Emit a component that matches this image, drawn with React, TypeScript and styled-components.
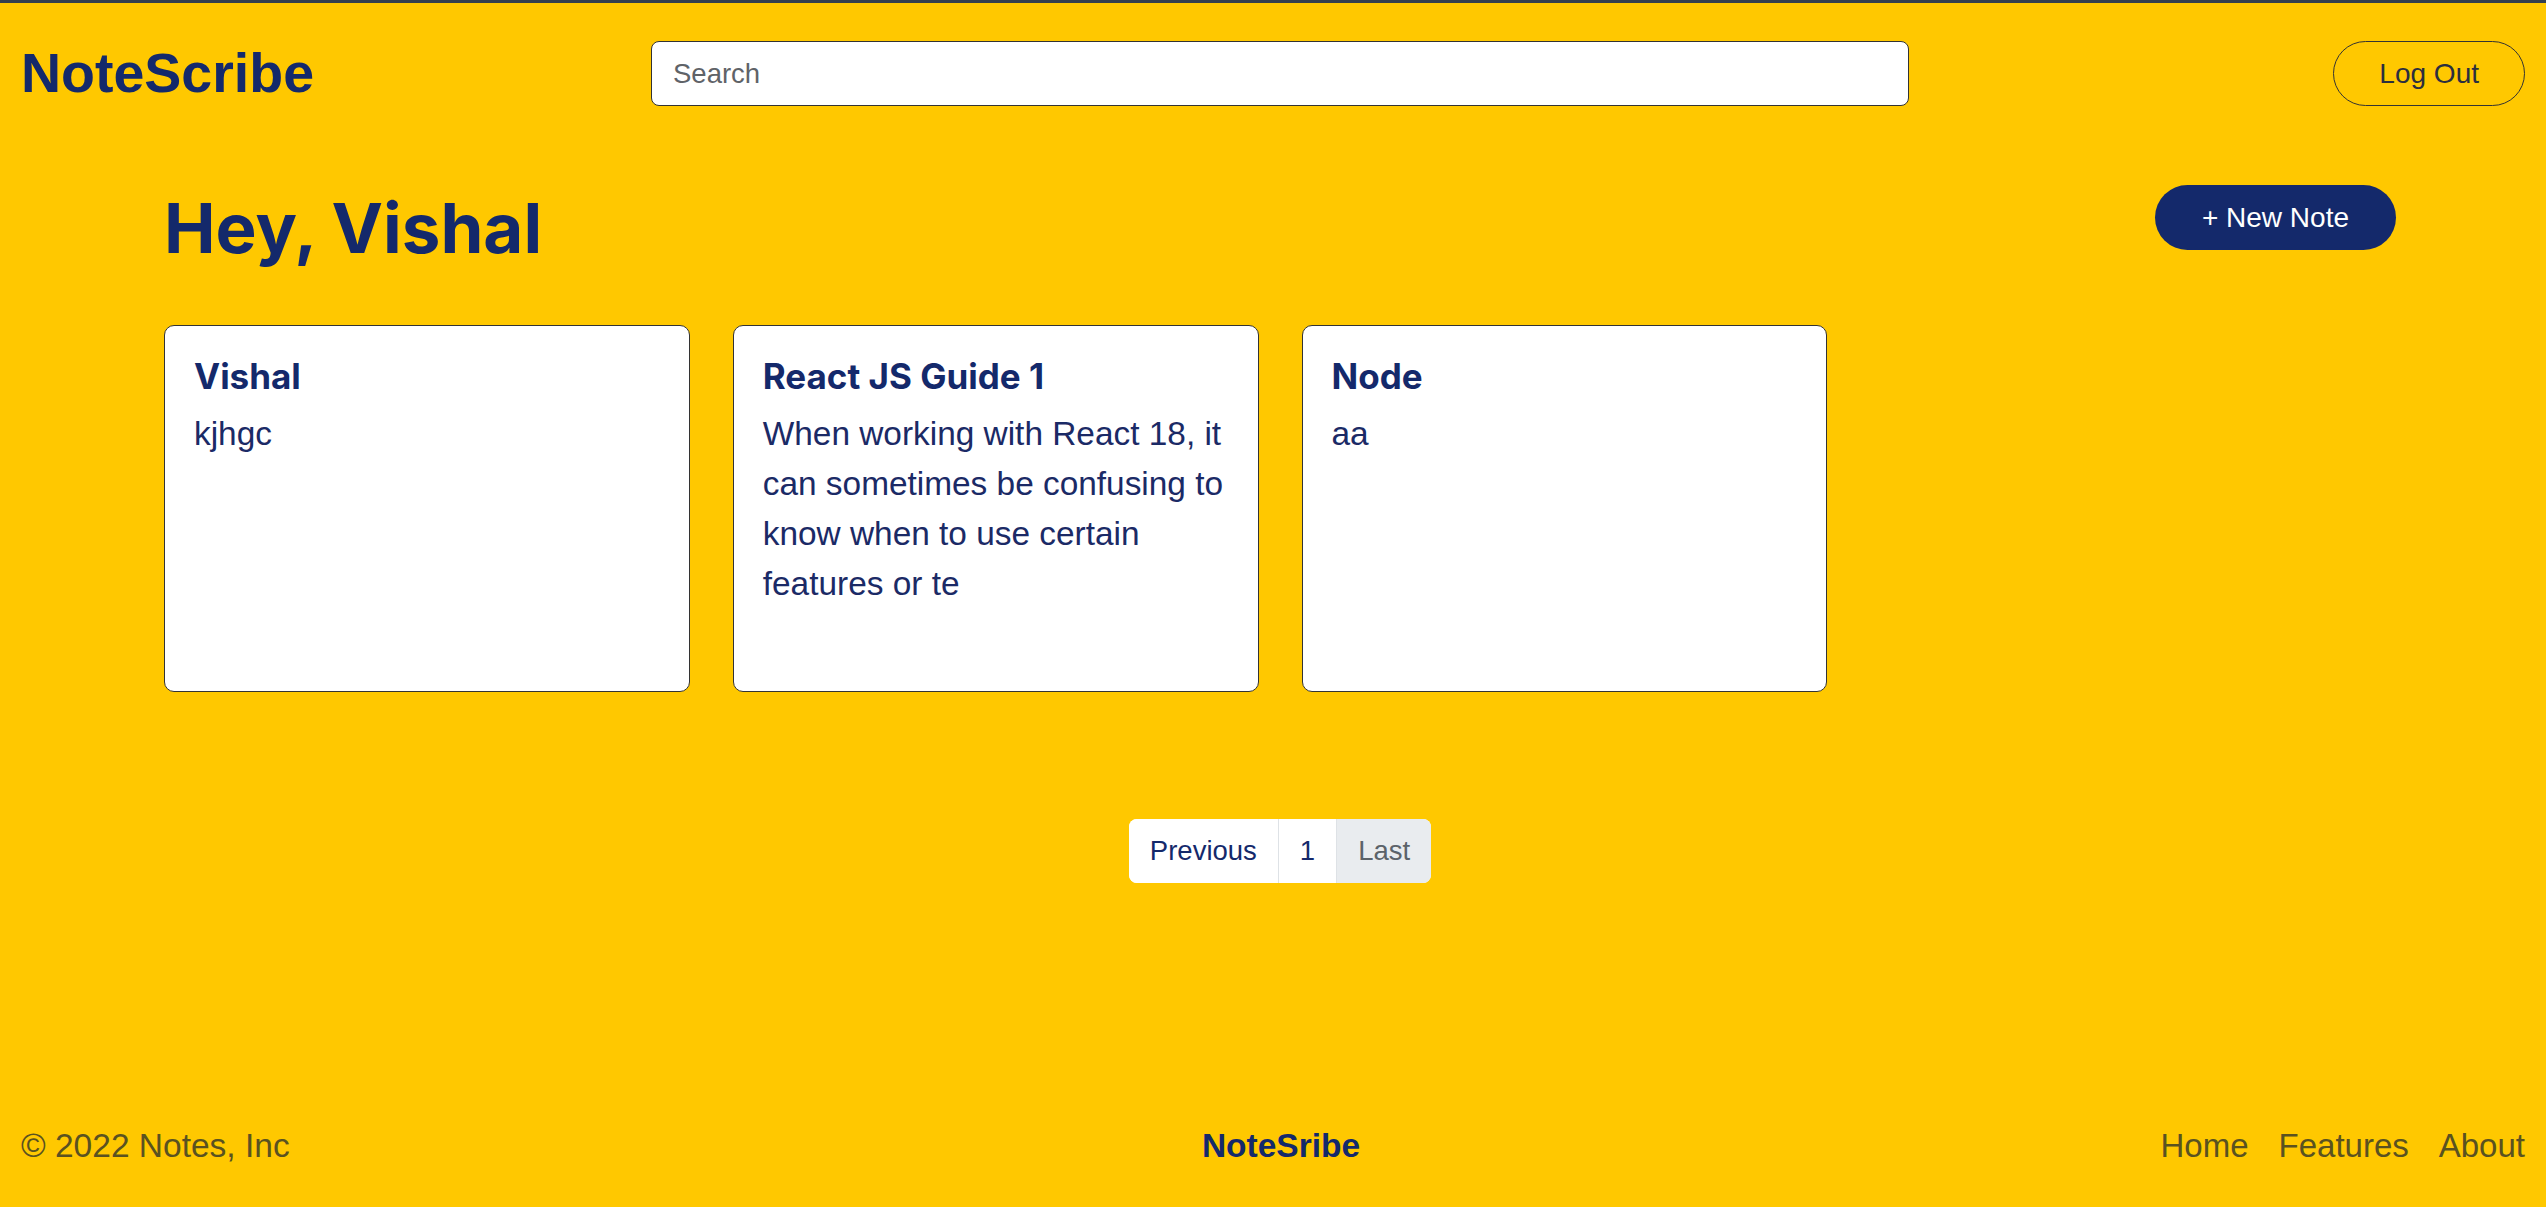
import React from "react";
import styled, { createGlobalStyle } from "styled-components";

const NAVY = "#14296b";
const YELLOW = "#ffc800";
const MUTED = "#5a5220";

const GlobalStyle = createGlobalStyle`
  *, *::before, *::after { box-sizing: border-box; }
  html, body { margin: 0; padding: 0; }
  body {
    background: ${YELLOW};
    font-family: "Liberation Sans", Arial, Helvetica, sans-serif;
  }
`;

const Page = styled.div`
  min-height: 100vh;
  display: flex;
  flex-direction: column;
  border-top: 3px solid #34404f;
  background: ${YELLOW};
`;

const Header = styled.header`
  display: grid;
  grid-template-columns: 630px 1258px 1fr;
  align-items: center;
  padding: 38px 21px 0;
`;

const Logo = styled.a`
  font-size: 55.5px;
  font-weight: 700;
  line-height: 65px;
  color: ${NAVY};
  text-decoration: none;
`;

const SearchInput = styled.input`
  height: 65px;
  width: 100%;
  border: 1px solid #333;
  border-radius: 8px;
  padding: 0 21px;
  font-family: inherit;
  font-size: 27.5px;
  color: #333;
  background: #fff;
  outline: none;
  &::placeholder { color: #5f6368; }
`;

const OutlineButton = styled.button`
  justify-self: end;
  height: 65px;
  padding: 0 45px;
  border: 1px solid #333;
  border-radius: 999px;
  background: transparent;
  font-family: inherit;
  font-size: 28px;
  color: #2b2e3f;
  cursor: pointer;
`;

const Main = styled.main`
  display: flex;
  flex-direction: column;
  padding: 0 150px 0 164px;
`;

const TitleRow = styled.div`
  margin-top: 79px;
  display: flex;
  justify-content: space-between;
  align-items: flex-start;
`;

const Greeting = styled.h1`
  margin: 2px 0 0;
  font-family: Inter, "Liberation Sans", sans-serif;
  font-size: 69px;
  font-weight: 700;
  line-height: 83px;
  color: ${NAVY};
`;

const PrimaryButton = styled.button`
  height: 65px;
  padding: 0 47px;
  border: none;
  border-radius: 999px;
  background: ${NAVY};
  color: #fff;
  font-family: inherit;
  font-size: 28px;
  cursor: pointer;
`;

const NotesGrid = styled.div`
  margin-top: 55px;
  display: grid;
  grid-template-columns: repeat(4, 1fr);
  gap: 43px;
`;

const NoteCard = styled.article`
  height: 367px;
  background: #fff;
  border: 1px solid #333;
  border-radius: 10px;
  padding: 29px;
  overflow: hidden;
`;

const NoteTitle = styled.h2`
  margin: 0 0 12px;
  font-family: Inter, "Liberation Sans", sans-serif;
  font-size: 35px;
  font-weight: 700;
  line-height: 42px;
  color: ${NAVY};
`;

const NoteBody = styled.p`
  margin: 0;
  font-size: 33.4px;
  line-height: 1.5;
  color: #1b2a66;
`;

const Pagination = styled.nav`
  margin-top: 127px;
  align-self: center;
  display: flex;
  background: #fff;
  border-radius: 8px;
  overflow: hidden;
`;

const PageItem = styled.button<{ $muted?: boolean; $first?: boolean }>`
  height: 64px;
  padding: 0 21px;
  border: none;
  border-left: ${(p) => (p.$first ? "none" : "1px solid #dee2e6")};
  background: ${(p) => (p.$muted ? "#e9ecef" : "#fff")};
  color: ${(p) => (p.$muted ? "#5c636a" : NAVY)};
  font-family: inherit;
  font-size: 27.5px;
  cursor: pointer;
`;

const Footer = styled.footer`
  margin-top: auto;
  display: grid;
  grid-template-columns: 1fr auto 1fr;
  align-items: center;
  padding: 24px 21px 36px;
  font-size: 33.5px;
  line-height: 50px;
  color: ${MUTED};
`;

const Copyright = styled.span``;

const FooterBrand = styled.span`
  padding-left: 16px;
  font-weight: 700;
  color: ${NAVY};
`;

const FooterLinks = styled.ul`
  justify-self: end;
  display: flex;
  gap: 30px;
  margin: 0;
  padding: 0;
  list-style: none;
  font-size: 33px;
`;

const FooterLink = styled.a`
  color: ${MUTED};
  text-decoration: none;
`;

const notes = [
  { title: "Vishal", body: "kjhgc" },
  {
    title: "React JS Guide 1",
    body: "When working with React 18, it can sometimes be confusing to know when to use certain features or te",
  },
  { title: "Node", body: "aa" },
];

export default function App() {
  return (
    <Page>
      <GlobalStyle />
      <Header>
        <Logo href="#">NoteScribe</Logo>
        <SearchInput placeholder="Search" />
        <OutlineButton>Log Out</OutlineButton>
      </Header>
      <Main>
        <TitleRow>
          <Greeting>Hey, Vishal</Greeting>
          <PrimaryButton>+ New Note</PrimaryButton>
        </TitleRow>
        <NotesGrid>
          {notes.map((n) => (
            <NoteCard key={n.title}>
              <NoteTitle>{n.title}</NoteTitle>
              <NoteBody>{n.body}</NoteBody>
            </NoteCard>
          ))}
        </NotesGrid>
        <Pagination>
          <PageItem $first>Previous</PageItem>
          <PageItem>1</PageItem>
          <PageItem $muted>Last</PageItem>
        </Pagination>
      </Main>
      <Footer>
        <Copyright>© 2022 Notes, Inc</Copyright>
        <FooterBrand>NoteSribe</FooterBrand>
        <FooterLinks>
          <li><FooterLink href="#">Home</FooterLink></li>
          <li><FooterLink href="#">Features</FooterLink></li>
          <li><FooterLink href="#">About</FooterLink></li>
        </FooterLinks>
      </Footer>
    </Page>
  );
}
